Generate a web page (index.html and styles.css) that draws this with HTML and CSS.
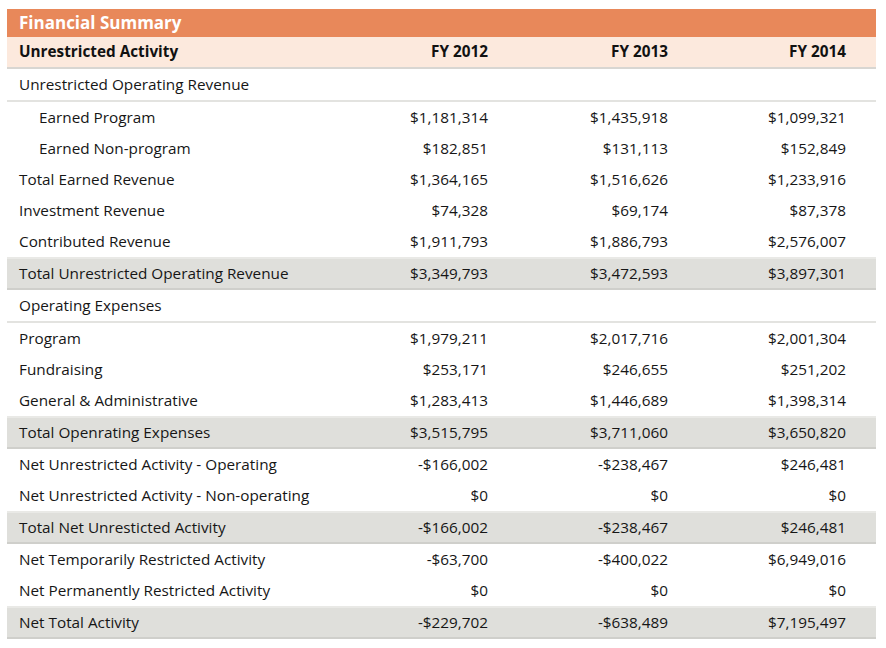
FILE: index.html
```html
<!DOCTYPE html>
<html>
<head>
<meta charset="utf-8">
<link rel="stylesheet" href="styles.css">
</head>
<body>
<div class="summary">
  <div class="title">Financial Summary</div>
  <table class="fin">
    <thead>
      <tr class="head">
        <th class="label">Unrestricted Activity</th>
        <th>FY 2012</th>
        <th>FY 2013</th>
        <th>FY 2014</th>
      </tr>
    </thead>
    <tbody>
      <tr class="section"><td class="label">Unrestricted Operating Revenue</td><td></td><td></td><td></td></tr>
      <tr><td class="label sub">Earned Program</td><td>$1,181,314</td><td>$1,435,918</td><td>$1,099,321</td></tr>
      <tr><td class="label sub">Earned Non-program</td><td>$182,851</td><td>$131,113</td><td>$152,849</td></tr>
      <tr><td class="label">Total Earned Revenue</td><td>$1,364,165</td><td>$1,516,626</td><td>$1,233,916</td></tr>
      <tr><td class="label">Investment Revenue</td><td>$74,328</td><td>$69,174</td><td>$87,378</td></tr>
      <tr><td class="label">Contributed Revenue</td><td>$1,911,793</td><td>$1,886,793</td><td>$2,576,007</td></tr>
      <tr class="total"><td class="label">Total Unrestricted Operating Revenue</td><td>$3,349,793</td><td>$3,472,593</td><td>$3,897,301</td></tr>
      <tr class="section"><td class="label">Operating Expenses</td><td></td><td></td><td></td></tr>
      <tr><td class="label">Program</td><td>$1,979,211</td><td>$2,017,716</td><td>$2,001,304</td></tr>
      <tr><td class="label">Fundraising</td><td>$253,171</td><td>$246,655</td><td>$251,202</td></tr>
      <tr><td class="label">General &amp; Administrative</td><td>$1,283,413</td><td>$1,446,689</td><td>$1,398,314</td></tr>
      <tr class="total"><td class="label">Total Openrating Expenses</td><td>$3,515,795</td><td>$3,711,060</td><td>$3,650,820</td></tr>
      <tr><td class="label">Net Unrestricted Activity - Operating</td><td>-$166,002</td><td>-$238,467</td><td>$246,481</td></tr>
      <tr><td class="label">Net Unrestricted Activity - Non-operating</td><td>$0</td><td>$0</td><td>$0</td></tr>
      <tr class="total"><td class="label">Total Net Unresticted Activity</td><td>-$166,002</td><td>-$238,467</td><td>$246,481</td></tr>
      <tr><td class="label">Net Temporarily Restricted Activity</td><td>-$63,700</td><td>-$400,022</td><td>$6,949,016</td></tr>
      <tr><td class="label">Net Permanently Restricted Activity</td><td>$0</td><td>$0</td><td>$0</td></tr>
      <tr class="total"><td class="label">Net Total Activity</td><td>-$229,702</td><td>-$638,489</td><td>$7,195,497</td></tr>
    </tbody>
  </table>
</div>
</body>
</html>
```
FILE: styles.css
```css
html, body {
  margin: 0;
  padding: 0;
  background: #ffffff;
}
body {
  font-family: "Open Sans", "Noto Sans", sans-serif;
  color: #161616;
}
.summary {
  margin: 9px 0 0 7px;
  width: 869px;
}
.title {
  background: #e8885a;
  color: #ffffff;
  font-weight: 700;
  font-size: 17px;
  height: 28px;
  line-height: 28px;
  padding-left: 12px;
}
.fin {
  width: 100%;
  border-collapse: collapse;
  table-layout: fixed;
  font-size: 15.3px;
}
.fin th, .fin td {
  padding: 0 29px 2px 0;
  text-align: right;
  white-space: nowrap;
  height: 29px;
}
.fin th:nth-child(1), .fin td:nth-child(1) { width: 318px; }
.fin th:nth-child(2), .fin td:nth-child(2) { width: 151px; }
.fin th:nth-child(3), .fin td:nth-child(3) { width: 151px; }
.fin th:nth-child(4), .fin td:nth-child(4) { padding-right: 30px; }
.fin th.label, .fin td.label {
  text-align: left;
  padding-left: 12px;
  padding-right: 0;
}
.fin td.sub { padding-left: 32px; }
.head {
  background: #fce9dd;
  border-bottom: 2px solid #d8d6d2;
}
.head th {
  font-weight: 700;
  color: #111111;
  height: 28px;
}
.section {
  border-bottom: 2px solid #e3e3e0;
}
.total {
  background: #dfdfdb;
  border-top: 2px solid #e9e9e6;
  border-bottom: 2px solid #cfcfcb;
}
.total td { height: 27px; }
```
